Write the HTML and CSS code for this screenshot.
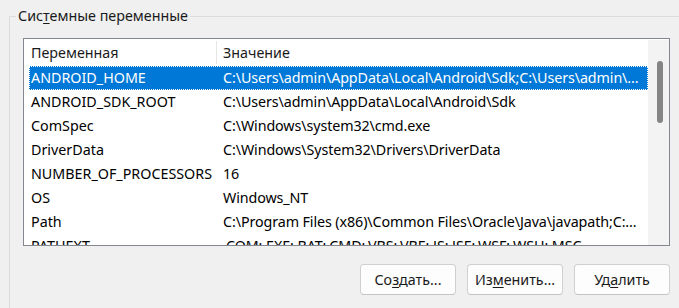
FILE: index.html
```html
<!DOCTYPE html>
<html lang="ru">
<head>
  <meta charset="UTF-8">
  <title>Системные переменные</title>
  <link rel="stylesheet" href="styles.css">
</head>
<body>

<fieldset class="group">
  <legend class="group-title">Сис<u>т</u>емные переменные</legend>

  <div class="listbox">
    <div class="list-area">
      <div class="list-head">
        <div class="col-name">Переменная</div>
        <div class="col-value">Значение</div>
      </div>
      <div class="list-body">
        <div class="row selected">
          <div class="col-name">ANDROID_HOME</div>
          <div class="col-value">C:\Users\admin\AppData\Local\Android\Sdk;C:\Users\admin\...</div>
        </div>
        <div class="row">
          <div class="col-name">ANDROID_SDK_ROOT</div>
          <div class="col-value">C:\Users\admin\AppData\Local\Android\Sdk</div>
        </div>
        <div class="row">
          <div class="col-name">ComSpec</div>
          <div class="col-value">C:\Windows\system32\cmd.exe</div>
        </div>
        <div class="row">
          <div class="col-name">DriverData</div>
          <div class="col-value">C:\Windows\System32\Drivers\DriverData</div>
        </div>
        <div class="row">
          <div class="col-name">NUMBER_OF_PROCESSORS</div>
          <div class="col-value">16</div>
        </div>
        <div class="row">
          <div class="col-name">OS</div>
          <div class="col-value">Windows_NT</div>
        </div>
        <div class="row">
          <div class="col-name">Path</div>
          <div class="col-value">C:\Program Files (x86)\Common Files\Oracle\Java\javapath;C:...</div>
        </div>
        <div class="row">
          <div class="col-name">PATHEXT</div>
          <div class="col-value">.COM;.EXE;.BAT;.CMD;.VBS;.VBE;.JS;.JSE;.WSF;.WSH;.MSC</div>
        </div>
      </div>
    </div>
    <div class="scrollbar">
      <div class="thumb"></div>
    </div>
  </div>

  <div class="buttons">
    <button>Со<u>з</u>дать...</button>
    <button>Из<u>м</u>енить...</button>
    <button>Уд<u>а</u>лить</button>
  </div>
</fieldset>

</body>
</html>
```

FILE: styles.css
```css
html, body {
  height: 100%;
}
body {
  margin: 0;
  background-color: #f0f0f0;
  font-family: "Noto Sans", "Liberation Sans", sans-serif;
  font-size: 14.3px;
  color: #000;
  overflow: hidden;
}
u {
  text-decoration-thickness: 1px;
  text-underline-offset: 2px;
}
.group {
  margin: 6px 0 0 9px;
  padding: 12px 0 0 13px;
  border: 1px solid #dcdcdc;
  border-right: none;
  border-bottom: none;
  min-width: 0;
  height: 100%;
  box-sizing: border-box;
}
.group-title {
  margin-left: -7px;
  padding: 0 2px;
  line-height: 20px;
  color: #1a1a1a;
}
.listbox {
  display: flex;
  margin-right: 9px;
  height: 208px;
  box-sizing: border-box;
  border: 1px solid #828790;
  background-color: #fff;
  overflow: hidden;
}
.list-area {
  flex: 1;
  min-width: 0;
}
.list-head {
  display: flex;
  height: 27px;
  padding-left: 5px;
  align-items: stretch;
  color: #1a1a1a;
}
.list-head .col-name,
.list-head .col-value {
  display: flex;
  align-items: center;
  margin-top: 2px;
  margin-bottom: 2px;
}
.list-head .col-name {
  border-right: 1px solid #e5e5e5;
}
.list-body {
  padding-left: 5px;
}
.col-name {
  width: 188px;
  flex: none;
  padding-left: 2px;
  box-sizing: border-box;
  white-space: nowrap;
}
.col-value {
  flex: 1;
  min-width: 0;
  padding-left: 6px;
  white-space: nowrap;
  overflow: hidden;
}
.list-body .col-value {
  letter-spacing: -0.1px;
}
.row {
  display: flex;
  height: 24px;
  line-height: 24px;
}
.row.selected {
  background-color: #0078d7;
  color: #fff;
  outline: 1px dotted #fff;
  outline-offset: -1px;
}
.scrollbar {
  width: 21px;
  flex: none;
  margin-top: 1px;
  background-color: #f3f3f3;
  display: flex;
  justify-content: center;
}
.thumb {
  width: 6px;
  height: 62px;
  margin-top: 21px;
  margin-left: 2px;
  background-color: #858585;
  border-radius: 3px;
}
.buttons {
  display: flex;
  justify-content: flex-end;
  gap: 11px;
  margin-top: 18px;
  padding-right: 9px;
}
button {
  width: 96px;
  height: 31px;
  font-family: inherit;
  font-size: 14.3px;
  color: #1a1a1a;
  background-color: #fdfdfd;
  border: 1px solid #d0d0d0;
  border-bottom-color: #c4c4c4;
  border-radius: 4px;
  padding: 0;
}
```
